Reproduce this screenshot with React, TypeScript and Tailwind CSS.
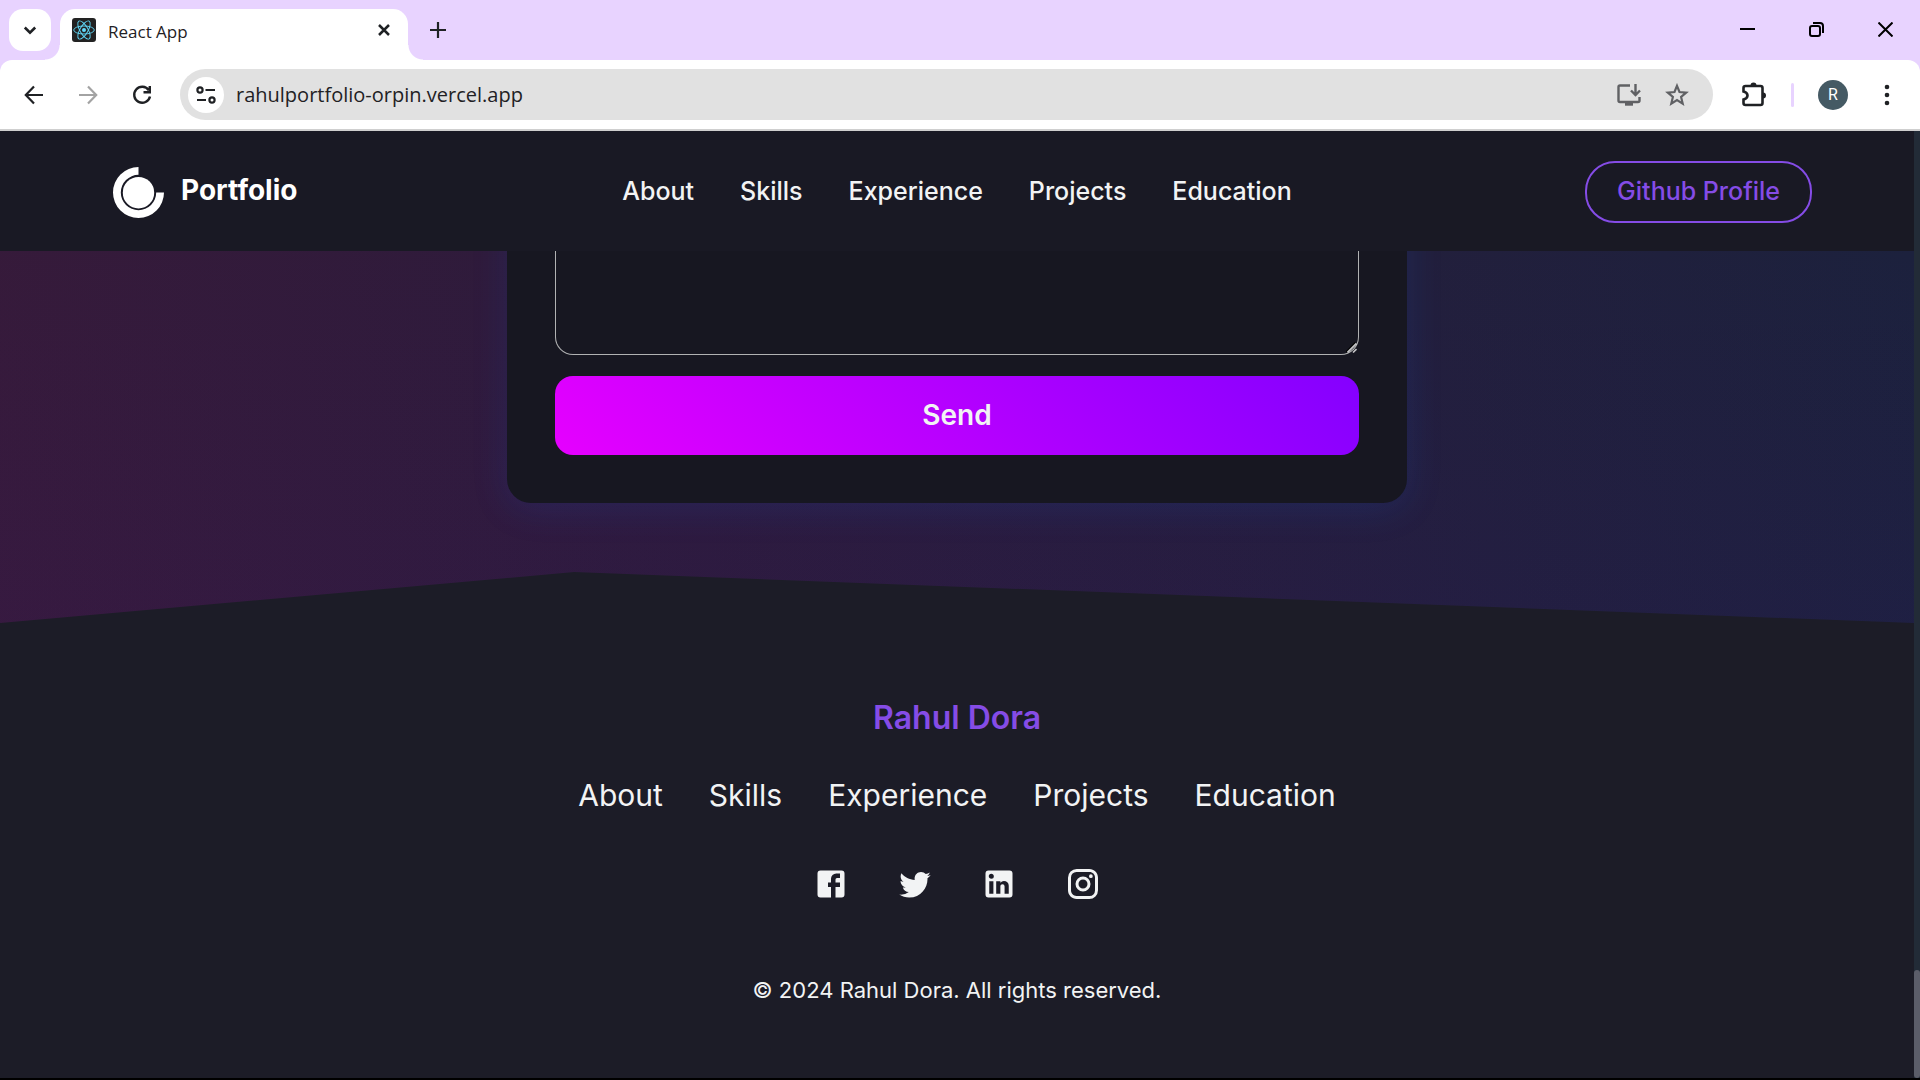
import type { ReactNode } from "react";

const links = ["About", "Skills", "Experience", "Projects", "Education"];

const socials = [
  {
    name: "Facebook",
    d: "M5 3h14a2 2 0 0 1 2 2v14a2 2 0 0 1-2 2H5a2 2 0 0 1-2-2V5a2 2 0 0 1 2-2m13 2h-2.5A3.5 3.5 0 0 0 12 8.5V11h-2v3h2v7h3v-7h3v-3h-3V9a1 1 0 0 1 1-1h2V5z",
  },
  {
    name: "Twitter",
    d: "M22.46 6c-.77.35-1.6.58-2.46.69.88-.53 1.56-1.37 1.88-2.38-.83.5-1.75.85-2.72 1.05C18.37 4.5 17.26 4 16 4c-2.35 0-4.27 1.92-4.27 4.29 0 .34.04.67.11.98C8.28 9.09 5.11 7.38 3 4.79c-.37.63-.58 1.37-.58 2.15 0 1.49.75 2.81 1.91 3.56-.71 0-1.37-.2-1.95-.5v.03c0 2.08 1.48 3.82 3.44 4.21a4.22 4.22 0 0 1-1.93.07 4.28 4.28 0 0 0 4 2.98 8.521 8.521 0 0 1-5.33 1.84c-.34 0-.68-.02-1.02-.06C3.44 20.29 5.7 21 8.12 21 16 21 20.33 14.46 20.33 8.79c0-.19 0-.37-.01-.56.84-.6 1.56-1.36 2.14-2.23z",
  },
  {
    name: "LinkedIn",
    d: "M19 3a2 2 0 0 1 2 2v14a2 2 0 0 1-2 2H5a2 2 0 0 1-2-2V5a2 2 0 0 1 2-2h14m-.5 15.5v-5.3a3.26 3.26 0 0 0-3.26-3.26c-.85 0-1.84.52-2.32 1.3v-1.11h-2.79v8.37h2.79v-4.93c0-.77.62-1.4 1.39-1.4a1.4 1.4 0 0 1 1.4 1.4v4.93h2.79M6.88 8.56a1.68 1.68 0 0 0 1.68-1.68c0-.93-.75-1.69-1.68-1.69a1.69 1.69 0 0 0-1.69 1.69c0 .93.76 1.68 1.69 1.68m1.39 9.94v-8.37H5.5v8.37h2.77z",
  },
  {
    name: "Instagram",
    d: "M7.8 2h8.4C19.4 2 22 4.6 22 7.8v8.4a5.8 5.8 0 0 1-5.8 5.8H7.8C4.6 22 2 19.4 2 16.2V7.8A5.8 5.8 0 0 1 7.8 2m-.2 2A3.6 3.6 0 0 0 4 7.6v8.8C4 18.39 5.61 20 7.6 20h8.8a3.6 3.6 0 0 0 3.6-3.6V7.6C20 5.61 18.39 4 16.4 4H7.6m9.65 1.5a1.25 1.25 0 1 1 0 2.5 1.25 1.25 0 0 1 0-2.5M12 7a5 5 0 0 1 5 5 5 5 0 0 1-5 5 5 5 0 0 1-5-5 5 5 0 0 1 5-5m0 2a3 3 0 0 0-3 3 3 3 0 0 0 3 3 3 3 0 0 0 3-3 3 3 0 0 0-3-3z",
  },
];

function Stroke({ size, width = 2, children }: { size: number; width?: number; children: ReactNode }) {
  return (
    <svg
      width={size}
      height={size}
      viewBox={`0 0 ${size} ${size}`}
      fill="none"
      stroke="currentColor"
      strokeWidth={width}
      aria-hidden="true"
    >
      {children}
    </svg>
  );
}

function ReactFavicon() {
  return (
    <svg width="24" height="24" viewBox="0 0 24 24" aria-hidden="true">
      <rect width="24" height="24" rx="3" fill="#222" />
      <g fill="none" stroke="#61dafb" strokeWidth="0.9">
        <ellipse cx="12" cy="12" rx="10.3" ry="4" />
        <ellipse cx="12" cy="12" rx="10.3" ry="4" transform="rotate(60 12 12)" />
        <ellipse cx="12" cy="12" rx="10.3" ry="4" transform="rotate(120 12 12)" />
      </g>
      <circle cx="12" cy="12" r="2" fill="#61dafb" />
    </svg>
  );
}

function TabStrip() {
  return (
    <div className="flex h-[60px] items-start bg-[#e8d3ff] pl-[9px] text-[#1f2124]">
      <button
        aria-label="Search tabs"
        className="mt-[9px] flex h-[42px] w-[42px] items-center justify-center rounded-[14px] bg-white"
      >
        <Stroke size={14} width={2.6}>
          <path d="M1.8 4.5 7 9.7 12.2 4.5" />
        </Stroke>
      </button>
      <div className="relative mt-[9px] ml-[9px] flex h-[51px] w-[348px] items-center rounded-t-[15px] bg-white pr-[18px] pb-[9px] pl-3">
        <span className="absolute bottom-0 -left-[15px] h-[15px] w-[15px] bg-[radial-gradient(circle_at_0_0,transparent_14px,white_15px)]" />
        <span className="absolute -right-[15px] bottom-0 h-[15px] w-[15px] bg-[radial-gradient(circle_at_100%_0,transparent_14px,white_15px)]" />
        <ReactFavicon />
        <span className="mt-[3px] ml-3 flex-1 font-['Open_Sans',sans-serif] text-[17px] leading-6">React App</span>
        <button aria-label="Close tab">
          <Stroke size={12} width={2.5}>
            <path d="M1 1 11 11M11 1 1 11" />
          </Stroke>
        </button>
      </div>
      <button aria-label="New tab" className="mt-[15px] ml-[15px] flex h-[30px] w-[30px] items-center justify-center">
        <Stroke size={16} width={2}>
          <path d="M8 0V16M0 8H16" strokeWidth="2.2" />
        </Stroke>
      </button>
      <div className="ml-auto flex h-[59px] text-black">
        <button aria-label="Minimize" className="flex w-[69px] items-center justify-center">
          <Stroke size={15}>
            <path d="M0 7H15" />
          </Stroke>
        </button>
        <button aria-label="Restore" className="flex w-[69px] items-center justify-center">
          <Stroke size={15} width={2}>
            <rect x="1" y="4" width="10" height="10" rx="2" />
            <path d="M4 1H11A3 3 0 0 1 14 4V11" />
          </Stroke>
        </button>
        <button aria-label="Close window" className="flex w-[69px] items-center justify-center">
          <Stroke size={15} width={2}>
            <path d="M0.5 0.5 14.5 14.5M14.5 0.5 0.5 14.5" />
          </Stroke>
        </button>
      </div>
    </div>
  );
}

function Toolbar() {
  return (
    <div className="bg-[#e8d3ff]">
      <div className="flex h-[71px] items-center rounded-t-xl border-b-2 border-[#cfcfcf] bg-white pr-2 pl-[7px] text-[#1f2124]">
        <button aria-label="Back" className="flex w-[54px] justify-center">
          <Stroke size={20} width={2.2}>
            <path d="M19 10H2.5M10 1.5 1.8 10 10 18.5" />
          </Stroke>
        </button>
        <button aria-label="Forward" className="flex w-[54px] justify-center text-[#a3a3a3]">
          <Stroke size={20} width={2.2}>
            <path d="M1 10H17.5M10 1.5 18.2 10 10 18.5" />
          </Stroke>
        </button>
        <button aria-label="Reload" className="flex w-[54px] justify-center">
          <Stroke size={20} width={2.4}>
            <path d="M16.8 5.2A8 8 0 1 0 18 11.5M17.8 1V7.3H11.5" />
          </Stroke>
        </button>
        <div className="ml-[11px] flex h-[51px] flex-1 items-center gap-3 rounded-full bg-[#e1e1e1] pr-6 pl-2">
          <button
            aria-label="View site information"
            className="flex h-9 w-9 items-center justify-center rounded-full bg-white"
          >
            <Stroke size={20} width={2.2}>
              <circle cx="4" cy="5" r="2.6" />
              <path d="M9.5 5H19M1 15H10" />
              <circle cx="16" cy="15" r="2.6" />
            </Stroke>
          </button>
          <input
            aria-label="Address"
            defaultValue="rahulportfolio-orpin.vercel.app"
            className="min-w-0 flex-1 bg-transparent font-['Open_Sans',sans-serif] text-[20px] outline-none"
          />
          <button aria-label="Install app" className="text-[#606164]">
            <Stroke size={24} width={2.4}>
              <path d="M13 2.5H3Q1.5 2.5 1.5 4V17.5Q1.5 19 3 19H21Q22.5 19 22.5 17.5V14" />
              <path d="M18.5 1V11M14 7.5 18.5 12 23 7.5" />
              <path d="M8 21H16" strokeWidth="3.4" />
            </Stroke>
          </button>
          <button aria-label="Bookmark this tab" className="ml-3 text-[#606164]">
            <Stroke size={24} width={2.2}>
              <path d="M12 2.8 14.5 9 21.2 9.6 16.1 13.9 17.7 20.6 12 17 6.3 20.6 7.9 13.9 2.8 9.6 9.5 9Z" />
            </Stroke>
          </button>
        </div>
        <button aria-label="Extensions" className="ml-3.5 flex w-[54px] justify-center">
          <Stroke size={26} width={2.6}>
            <path d="M4.5 4H19.5Q21.5 4 21.5 6V21Q21.5 23 19.5 23H4.5Q2.5 23 2.5 21V17.5Q6.5 16.5 6.5 13.5T2.5 9.5V6Q2.5 4 4.5 4Z" />
            <path d="M9.5 3.5A3 3 0 0 1 15.5 3.5ZM22 10.5A3 3 0 0 1 22 16.5Z" fill="currentColor" stroke="none" />
          </Stroke>
        </button>
        <span className="ml-2.5 h-6 w-[3px] rounded-full bg-[#e8d3ff]" />
        <button
          aria-label="Profile"
          className="ml-6 flex h-[30px] w-[30px] items-center justify-center rounded-full bg-[#455a64] font-[Roboto,sans-serif] text-[16px] leading-none text-white"
        >
          R
        </button>
        <button aria-label="Menu" className="ml-3.5 flex w-[50px] justify-center">
          <svg width="6" height="22" viewBox="0 0 6 22" fill="currentColor" aria-hidden="true">
            <circle cx="3" cy="3" r="2.3" />
            <circle cx="3" cy="11" r="2.3" />
            <circle cx="3" cy="19" r="2.3" />
          </svg>
        </button>
      </div>
    </div>
  );
}

function SiteNav() {
  return (
    <header className="relative z-10 grid h-[120px] shrink-0 grid-cols-[1fr_auto_1fr] items-center bg-[#191924] px-[102px] pt-0.5">
      <a href="#home" className="flex items-center gap-[17px] pl-[11px] text-[28px] leading-9 font-bold text-white">
        <svg width="51" height="51" viewBox="0 0 51 51" fill="currentColor" aria-hidden="true">
          <path d="M25.5 0A25.5 25.5 0 1 0 51 25.5H43.2A17.7 17.7 0 1 1 25.5 7.8Z" />
          <circle cx="25.5" cy="25.7" r="15.7" />
        </svg>
        <span className="pb-1">Portfolio</span>
      </a>
      <nav className="flex gap-[46px] text-[25px] font-medium">
        {links.map((l) => (
          <a key={l} href={`#${l.toLowerCase()}`}>
            {l}
          </a>
        ))}
      </nav>
      <a
        href="#github"
        className="flex h-[62px] items-center justify-self-end rounded-[30px] border-2 border-[#854ce6] px-[30px] text-[25px] font-medium text-[#854ce6]"
      >
        Github Profile
      </a>
    </header>
  );
}

function Contact() {
  return (
    <section className="flex h-[372px] shrink-0 items-start justify-center overflow-hidden bg-[linear-gradient(to_bottom,rgba(50,20,140,0),rgba(50,20,140,0.08)),linear-gradient(75deg,#371a3a_0%,#2d1b3b_36%,#221f3c_75%,#1c213d_100%)] [clip-path:polygon(0_0,100%_0,100%_100%,30%_calc(100%_-_51px),0_100%)]">
      <form className="-mt-20 flex w-full max-w-[900px] flex-col rounded-b-3xl bg-[#171721] px-12 pt-20 pb-12 shadow-[0_6px_36px_rgba(23,92,230,0.15)]">
        <div className="relative mb-[21px] flex">
          <textarea
            aria-label="Message"
            className="h-[104px] w-full resize-none rounded-b-[18px] border border-t-0 border-[#b1b2b3] bg-transparent px-6 py-4 text-[25px] outline-none"
          />
          <svg
            className="absolute right-0.5 bottom-0.5"
            width="11"
            height="11"
            viewBox="0 0 11 11"
            fill="none"
            aria-hidden="true"
          >
            <path d="M0 10 9.5 0.5" stroke="#000" strokeWidth="1.5" />
            <path d="M1.5 10.5 10.5 1.5" stroke="#c4c4c6" strokeWidth="1.8" />
            <path d="M7 10.5 10.5 7" stroke="#c4c4c6" strokeWidth="1.6" />
          </svg>
        </div>
        <button
          type="button"
          className="h-[79px] rounded-[18px] bg-[linear-gradient(225deg,#8400ff_0%,#e600ff_100%)] pb-0.5 text-[28px] font-semibold"
        >
          Send
        </button>
      </form>
    </section>
  );
}

function Footer() {
  return (
    <footer className="flex flex-1 flex-col items-center pt-[77px]">
      <h1 className="text-[32px] leading-9 font-semibold text-[#854ce6]">Rahul Dora</h1>
      <nav className="mt-[41px] flex gap-[46px] text-[30px] leading-9">
        {links.map((l) => (
          <a key={l} href={`#${l.toLowerCase()}`}>
            {l}
          </a>
        ))}
      </nav>
      <div className="mt-[53px] flex gap-12">
        {socials.map((s) => (
          <a key={s.name} href={`#${s.name.toLowerCase()}`} aria-label={s.name}>
            <svg width="36" height="36" viewBox="0 0 24 24" fill="currentColor" aria-hidden="true">
              <path d={s.d} />
            </svg>
          </a>
        ))}
      </div>
      <p className="mt-[74px] text-[22px] leading-7">© 2024 Rahul Dora. All rights reserved.</p>
    </footer>
  );
}

export default function App() {
  return (
    <div className="flex h-screen flex-col overflow-hidden">
      <TabStrip />
      <Toolbar />
      <div className="flex min-h-0 flex-1 border-b-2 border-black bg-[#1c1c27] font-[Inter,sans-serif] text-[#f2f3f4]">
        <main className="flex min-w-0 flex-1 flex-col overflow-hidden">
          <SiteNav />
          <Contact />
          <Footer />
        </main>
        <div className="flex w-1.5 flex-col justify-end bg-[#222b37]">
          <div className="h-[108px] rounded-full bg-[#5b5d69]" />
        </div>
      </div>
    </div>
  );
}
